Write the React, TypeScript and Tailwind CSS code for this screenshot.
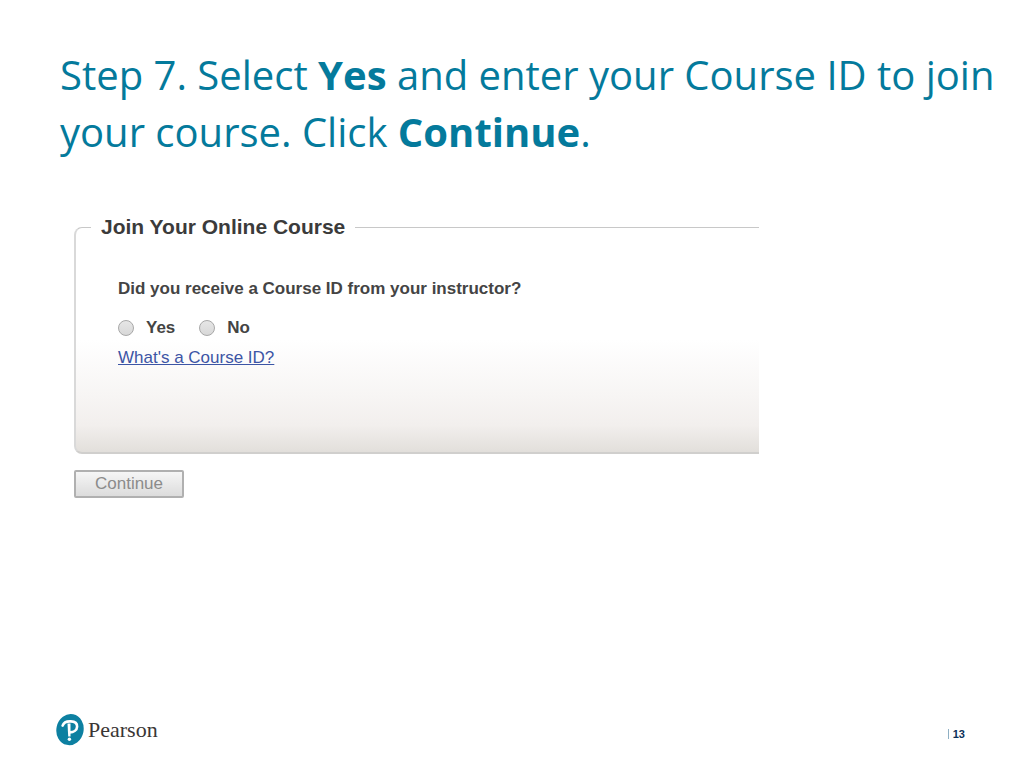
import { useState } from "react"

const options = ["Yes", "No"]

function PearsonMark() {
    return (
        <svg viewBox="0 0 28 32" className="h-8 w-7 shrink-0" aria-hidden="true">
            <ellipse cx="14" cy="15.6" rx="13.6" ry="15.6" transform="rotate(12 14 15.6)" fill="#0d80a1" />
            <path
                d="M6.6 11.6C7.6 8.6 11 7.2 14.8 7.4C18.6 7.6 21.2 9.4 21.1 12.6C21 16 17.8 18.4 13.6 18.4"
                fill="none"
                stroke="#fff"
                strokeWidth="2.6"
                strokeLinecap="round"
            />
            <path d="M11.5 9.4H14.5V22.4H12.2Z" fill="#fff" />
            <circle cx="13.4" cy="25.2" r="1.7" fill="#fff" />
        </svg>
    )
}

export default function App() {
    const [answer, setAnswer] = useState("")

    return (
        <div className="flex min-h-screen flex-col bg-white font-['Liberation_Sans',Arial,sans-serif]">
            <main className="flex-1 pt-[46px]">
                <h1 className="pl-[60px] pr-6 font-['Open_Sans',sans-serif] text-[40px] leading-[57px] text-[#047a9c]">
                    Step 7. Select <strong>Yes</strong> and enter your Course ID to join your course. Click{" "}
                    <strong>Continue</strong>.
                </h1>

                <form className="mt-[53px] px-[74px]" onSubmit={(e) => e.preventDefault()}>
                    <fieldset className="w-full max-w-[685px] rounded-l-lg border-t border-b-2 border-l-2 border-t-[#c8c8c8] border-b-[#d0cfcd] border-l-[#d9d9d9] bg-[linear-gradient(to_bottom,#fff_50%,#f7f5f4_75%,#f2efed_88%,#e2dfdb_100%)] pb-[82px] pl-[42px]">
                        <legend className="-ml-[27px] px-[10px] text-[21px] font-bold leading-7 text-[#3b3b3b]">
                            Join Your Online Course
                        </legend>

                        {/* Question */}
                        <p className="mt-9 text-[17px] font-bold leading-6 text-[#444]">
                            Did you receive a Course ID from your instructor?
                        </p>
                        <div className="mt-[15px] flex gap-6">
                            {options.map((option) => (
                                <label
                                    key={option}
                                    className="flex items-center gap-3 text-[17px] font-bold leading-6 text-[#444]"
                                >
                                    <input
                                        type="radio"
                                        name="course-id"
                                        value={option}
                                        checked={answer === option}
                                        onChange={() => setAnswer(option)}
                                        className="size-4 appearance-none rounded-full border border-[#a8a8a8] bg-linear-to-b from-[#e6e6e6] to-[#d8d8d8] checked:border-4 checked:border-[#555]"
                                    />
                                    {option}
                                </label>
                            ))}
                        </div>
                        <a href="#course-id" className="mt-[6px] block w-fit text-[17px] leading-6 text-[#3c55a5] underline">
                            What's a Course ID?
                        </a>
                    </fieldset>

                    <button
                        type="submit"
                        className="mt-4 h-7 w-[110px] rounded-xs border-2 border-[#b0b0b0] bg-linear-to-b from-[#f6f6f6] to-[#dcdcdc] text-[17px] leading-6 text-[#8b8b8b]"
                    >
                        Continue
                    </button>
                </form>
            </main>

            <footer className="flex items-center justify-between pb-[22px] pl-14 pr-[59px]">
                <div className="flex items-center gap-1 font-['Liberation_Serif','Times_New_Roman',serif] text-[22px] leading-8 text-[#3a3635]">
                    <PearsonMark />
                    Pearson
                </div>
                <div className="mt-2 flex items-center gap-1 text-[11px] font-bold leading-3 text-[#0b3059]">
                    <span className="h-[10px] w-px bg-[#8fb0c4]" />
                    13
                </div>
            </footer>
        </div>
    )
}
